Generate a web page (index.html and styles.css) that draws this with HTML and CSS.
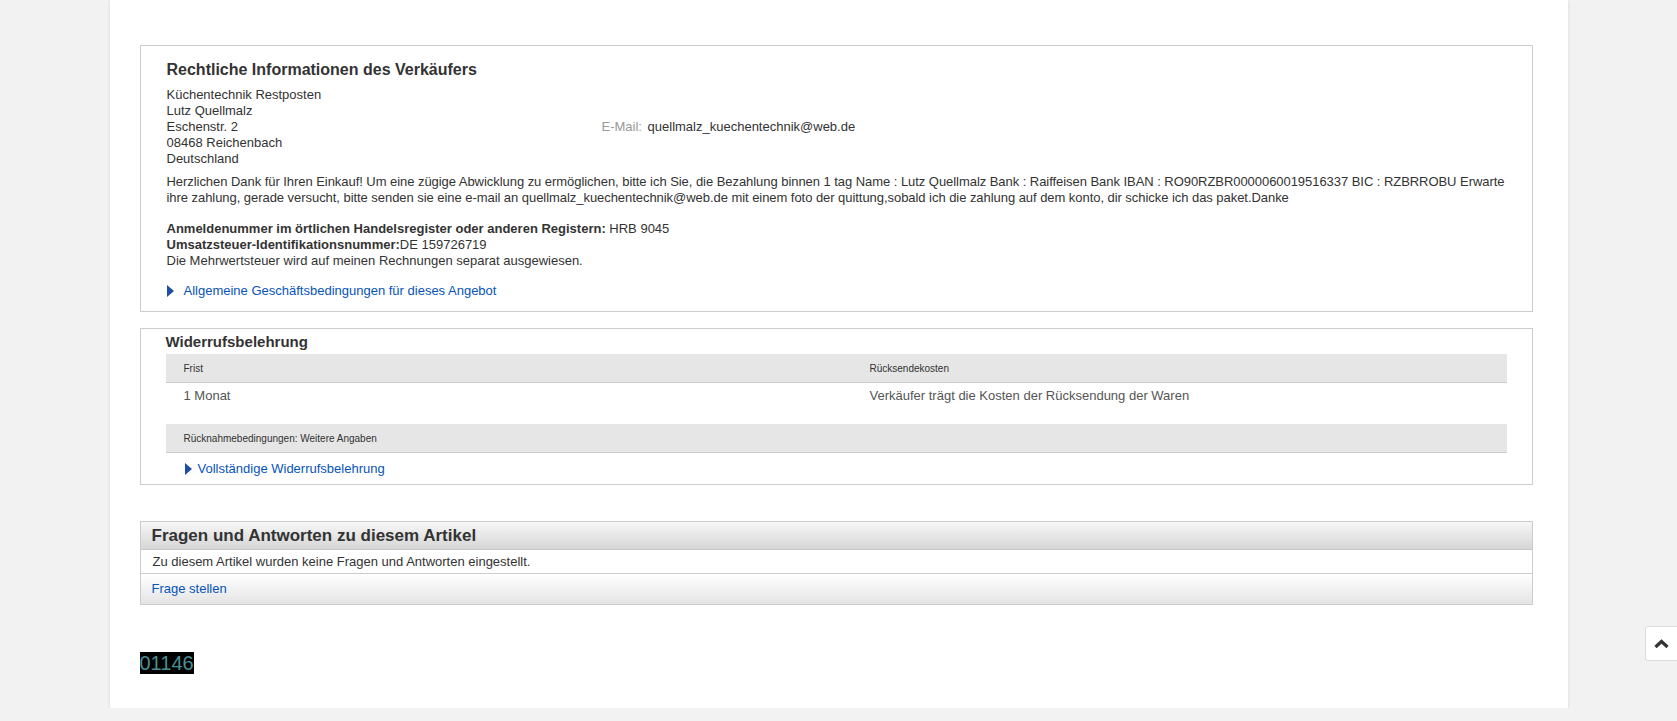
FILE: index.html
```html
<!DOCTYPE html>
<html lang="de">
<head>
  <meta charset="UTF-8" />
  <title>Rechtliche Informationen</title>
  <link rel="stylesheet" href="styles.css">
</head>
<body>
  <div class="page">
    <div class="box legal">
      <h2>Rechtliche Informationen des Verkäufers</h2>
      <div class="contact">
        <div class="address">
          Küchentechnik Restposten<br>
          Lutz Quellmalz<br>
          Eschenstr. 2<br>
          08468 Reichenbach<br>
          Deutschland
        </div>
        <div class="mail">
          <span class="label">E-Mail:</span> quellmalz_kuechentechnik@web.de
        </div>
      </div>
      <p class="note">Herzlichen Dank für Ihren Einkauf! Um eine zügige Abwicklung zu ermöglichen, bitte ich Sie, die Bezahlung binnen 1 tag Name : Lutz Quellmalz Bank : Raiffeisen Bank IBAN : RO90RZBR0000060019516337 BIC : RZBRROBU Erwarte ihre zahlung, gerade versucht, bitte senden sie eine e-mail an quellmalz_kuechentechnik@web.de mit einem foto der quittung,sobald ich die zahlung auf dem konto, dir schicke ich das paket.Danke</p>
      <p class="register">
        <b>Anmeldenummer im örtlichen Handelsregister oder anderen Registern:</b> HRB 9045<br>
        <b>Umsatzsteuer-Identifikationsnummer:</b>DE 159726719<br>
        Die Mehrwertsteuer wird auf meinen Rechnungen separat ausgewiesen.
      </p>
      <a class="more" href="#"><span class="arrow"></span>Allgemeine Geschäftsbedingungen für dieses Angebot</a>
    </div>

    <div class="box returns">
      <h3>Widerrufsbelehrung</h3>
      <table class="terms">
        <tr class="head">
          <td class="first">Frist</td>
          <td>Rücksendekosten</td>
        </tr>
        <tr class="data">
          <td>1 Monat</td>
          <td>Verkäufer trägt die Kosten der Rücksendung der Waren</td>
        </tr>
        <tr class="head">
          <td colspan="2">Rücknahmebedingungen: Weitere Angaben</td>
        </tr>
      </table>
      <a class="more inset" href="#"><span class="arrow"></span>Vollständige Widerrufsbelehrung</a>
    </div>

    <div class="qa">
      <div class="qa-head">Fragen und Antworten zu diesem Artikel</div>
      <div class="qa-body">Zu diesem Artikel wurden keine Fragen und Antworten eingestellt.</div>
      <div class="qa-foot"><a href="#">Frage stellen</a></div>
    </div>

    <div class="counter"><span>01146</span></div>
  </div>

  <a class="to-top" href="#">
    <svg width="15" height="10" viewBox="0 0 15 10"><path d="M1.5 8 L7.5 2.5 L13.5 8" fill="none" stroke="#333" stroke-width="3.2"/></svg>
  </a>
</body>
</html>
```

FILE: styles.css
```css
body {
  margin: 0;
  background: #f2f2f2;
  font-family: "Liberation Sans", Arial, sans-serif;
  font-size: 13px;
  color: #333;
}
a {
  color: #0654ba;
  text-decoration: none;
}
.page {
  margin: 0 auto;
  padding: 45px 35px 31px 30px;
  width: 1393px;
  background: #fff;
  box-shadow: 0 1px 3px rgba(0, 0, 0, 0.12);
}
.box {
  border: 1px solid #ccc;
}
.legal {
  padding: 14px 6px 12px 26px;
  line-height: 16px;
}
.legal h2 {
  margin: 0 0 7px;
  font-size: 16px;
  line-height: 20px;
}
.contact {
  display: flex;
}
.address {
  width: 435px;
}
.mail {
  margin-top: 32px;
}
.mail .label {
  color: #999;
  margin-right: 2px;
}
.note {
  margin: 7px 0 0;
  letter-spacing: -0.05px;
}
.register {
  margin: 15px 0 14px;
}
.more {
  display: flex;
  align-items: center;
  line-height: 16px;
}
.arrow {
  width: 0;
  height: 0;
  border-top: 6px solid transparent;
  border-bottom: 6px solid transparent;
  border-left: 7px solid #1f4fa3;
  margin-right: 10px;
}
.returns {
  margin-top: 16px;
  padding: 4px 25px 7px 25px;
}
.returns h3 {
  margin: 0 0 3px;
  font-size: 15px;
  line-height: 18px;
}
.terms {
  width: 100%;
  border-collapse: collapse;
}
.terms td {
  padding: 0 18px;
}
.terms .first {
  width: 650px;
}
.terms .head td {
  background: #e6e6e6;
  border-bottom: 1px solid #ccc;
  height: 28px;
  font-size: 10px;
}
.terms .data td {
  height: 36px;
  vertical-align: top;
  padding-top: 5px;
  color: #555;
}
.inset {
  margin: 8px 0 0 19px;
}
.inset .arrow {
  margin-right: 6px;
}
.qa {
  margin-top: 36px;
  border: 1px solid #ccc;
}
.qa-head {
  height: 27px;
  line-height: 27px;
  padding-left: 11px;
  font-size: 17px;
  font-weight: bold;
  background: linear-gradient(#f7f7f7, #d6d6d6);
  border-bottom: 1px solid #c8c8c8;
}
.qa-body {
  height: 23px;
  line-height: 23px;
  padding-left: 12px;
  border-bottom: 1px solid #ccc;
}
.qa-foot {
  height: 30px;
  line-height: 30px;
  padding-left: 11px;
  background: linear-gradient(#fff, #e4e4e4);
}
.counter {
  margin-top: 47px;
  line-height: 22px;
}
.counter span {
  display: inline-block;
  background: #000;
  color: #4a8f92;
  font-size: 20px;
}
.to-top {
  position: fixed;
  right: 0;
  top: 626px;
  width: 31px;
  height: 33px;
  display: flex;
  align-items: center;
  justify-content: center;
  background: #fff;
  border: 1px solid #ddd;
  border-right: none;
  border-radius: 3px 0 0 3px;
}
```
